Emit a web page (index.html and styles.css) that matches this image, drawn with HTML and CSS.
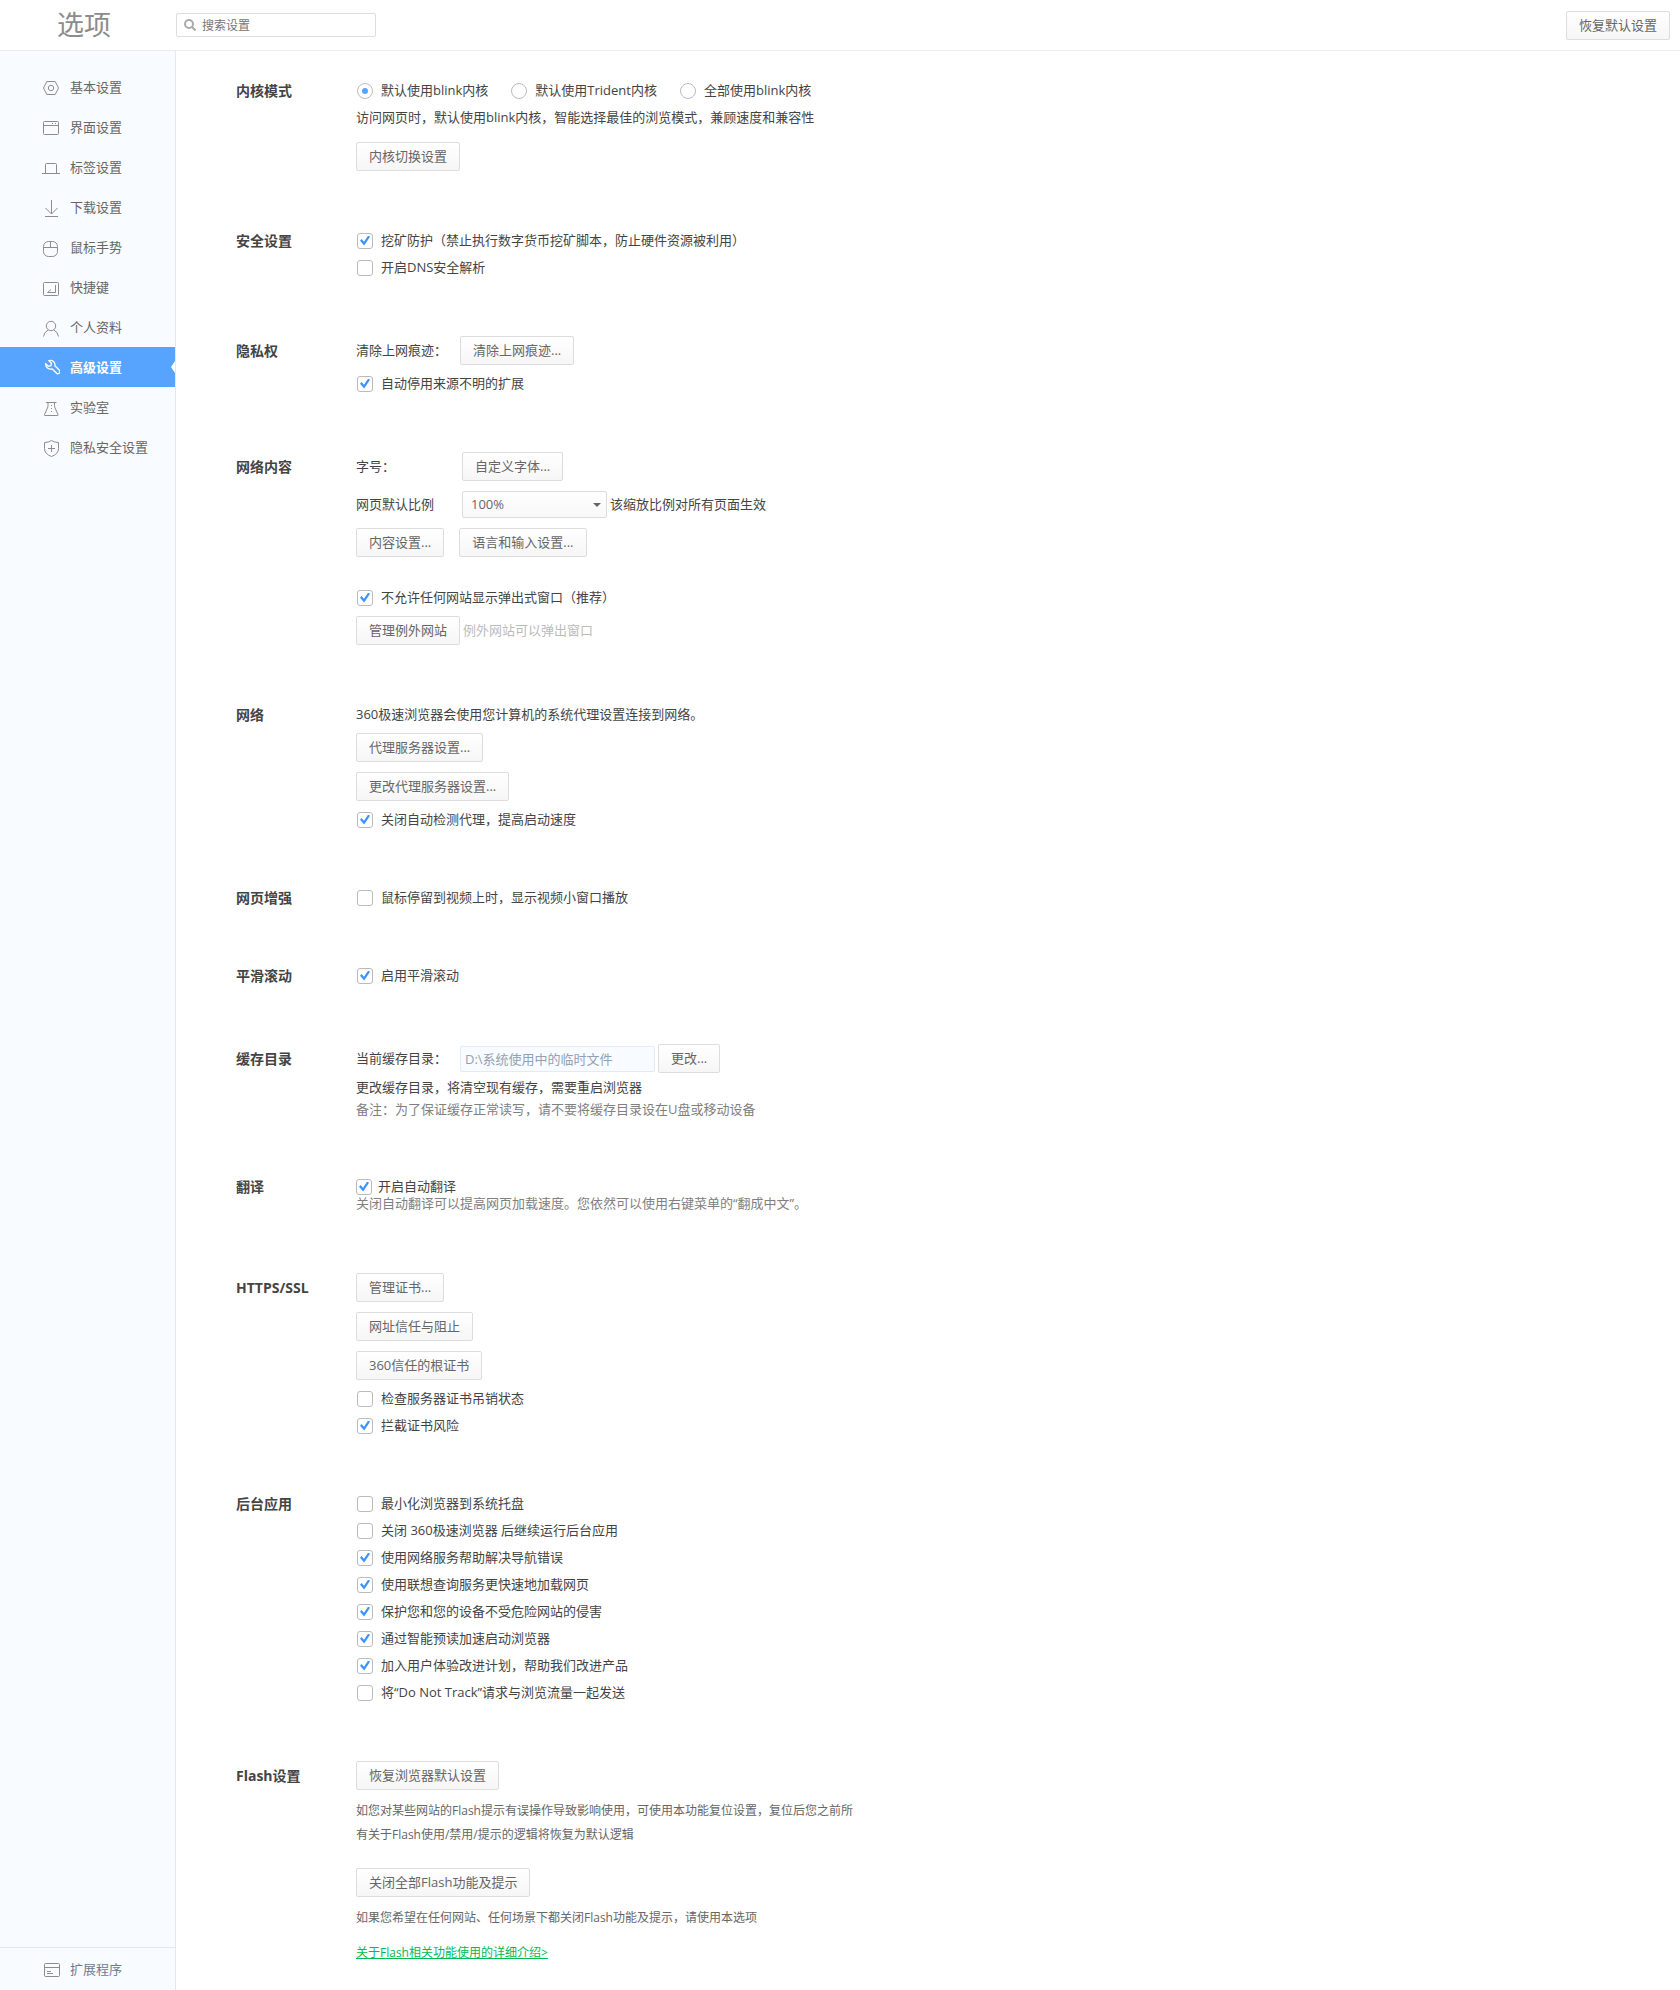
FILE: index.html
```html
<!DOCTYPE html>
<html lang="zh-CN">
<head>
<meta charset="utf-8">
<meta name="viewport" content="width=device-width, initial-scale=1">
<title>选项 - 高级设置</title>
<link rel="stylesheet" href="styles.css">
</head>
<body>
<header class="topbar">
  <h1 class="topbar-title">选项</h1>
  <label class="search">
    <svg class="search-icon" viewBox="0 0 12 12" aria-hidden="true"><circle cx="5" cy="5" r="4"/><path d="M8 8l3.5 3.5"/></svg>
    <input type="text" class="search-input" placeholder="搜索设置" aria-label="搜索设置">
  </label>
  <button type="button" class="btn topbar-reset">恢复默认设置</button>
</header>

<div class="layout">
  <nav class="sidebar">
    <ul class="nav-list">
      <li><a class="nav-link" href="#basic"><svg class="icon" viewBox="0 0 18 20"><path d="M4.8 4.500h8.400L16.500 11l-3.300 6.500H4.800L1.500 11z"/><circle cx="9" cy="11" r="2.700"/></svg>基本设置</a></li>
      <li><a class="nav-link" href="#ui"><svg class="icon" viewBox="0 0 18 20"><rect x="1.5" y="4.5" width="15" height="13" rx="1"/><path d="M1.500 8.500h15M10 6.500h1M13 6.500h1"/></svg>界面设置</a></li>
      <li><a class="nav-link" href="#tabs"><svg class="icon" viewBox="0 0 18 20"><path d="M0 16.500h18M3.500 16.500V7.500q0-1 1-1h9q1 0 1 1v9"/></svg>标签设置</a></li>
      <li><a class="nav-link" href="#download"><svg class="icon" viewBox="0 0 18 20"><path d="M9.500 3v14M3.500 11l6 6 6-6M3 19.500h13"/></svg>下载设置</a></li>
      <li><a class="nav-link" href="#mouse"><svg class="icon" viewBox="0 0 18 20"><rect x="1.500" y="4.500" width="14" height="15" rx="5"/><path d="M1.500 10.500h14M8.500 4.500v6"/></svg>鼠标手势</a></li>
      <li><a class="nav-link" href="#keys"><svg class="icon" viewBox="0 0 18 20"><rect x="1.500" y="5.500" width="15" height="13" rx="1"/><path d="M13.500 8v7.500H5.500L9 12.500"/></svg>快捷键</a></li>
      <li><a class="nav-link" href="#profile"><svg class="icon" viewBox="0 0 18 20"><circle cx="9" cy="9" r="4.700"/><path d="M1.500 19.500q.3-4 4.700-6.600M16.500 19.500q-.3-4-4.700-6.600"/></svg>个人资料</a></li>
      <li><a class="nav-link nav-link-active" href="#advanced" aria-current="page"><svg class="icon" viewBox="0 0 18 20"><path d="M7 3.700c3.500-1 6.600 1.500 5.900 5.100l4.300 4.200c1.200 1.300.6 3.300-.8 3.700-.8.200-1.500-.1-2-.7L10.200 12c-3.500.8-6.800-1.700-6.500-5.200l2.800 2.500 2.500-.6.500-2.500z"/></svg>高级设置</a></li>
      <li><a class="nav-link" href="#lab"><svg class="icon" viewBox="0 0 18 20"><path d="M4 5.500h10.500M6 5.500v3q0 1.500-1 3.500l-2.500 5.500q-.5 1 .5 1h12.500q1 0 .5-1L13.500 12q-1-2-1-3.500v-3M9.500 8v1M9.500 11v1M9.500 14v1"/></svg>实验室</a></li>
      <li><a class="nav-link" href="#security"><svg class="icon" viewBox="0 0 18 20"><path d="M9.500 3.500q3 2 7 2v6q0 5.500-7 8-7-2.500-7-8v-6q4 0 7-2zM9.500 8v7M6 11.500h7"/></svg>隐私安全设置</a></li>
    </ul>
    <a class="nav-link nav-link-footer" href="#extensions"><svg class="icon" viewBox="0 0 18 20"><rect x="2.500" y="4.500" width="15" height="13" rx="1"/><path d="M2.500 8.500h15M5 12.500h4M5 14.500h6"/></svg>扩展程序</a>
  </nav>

  <main class="content">
    <section class="section">
      <h2 class="section-title">内核模式</h2>
      <div class="section-body">
        <div class="radios" role="radiogroup" aria-label="内核模式">
          <label class="option"><input type="radio" name="core" class="radio" checked>默认使用blink内核</label>
          <label class="option"><input type="radio" name="core" class="radio">默认使用Trident内核</label>
          <label class="option"><input type="radio" name="core" class="radio">全部使用blink内核</label>
        </div>
        <p class="line line-spaced">访问网页时，默认使用blink内核，智能选择最佳的浏览模式，兼顾速度和兼容性</p>
        <div class="row"><button type="button" class="btn">内核切换设置</button></div>
      </div>
    </section>

    <section class="section">
      <h2 class="section-title">安全设置</h2>
      <div class="section-body">
        <label class="option"><input type="checkbox" class="check" checked>挖矿防护（禁止执行数字货币挖矿脚本，防止硬件资源被利用）</label>
        <label class="option"><input type="checkbox" class="check">开启DNS安全解析</label>
      </div>
    </section>

    <section class="section section-form">
      <h2 class="section-title">隐私权</h2>
      <div class="section-body">
        <div class="row"><span class="field-label">清除上网痕迹：</span><button type="button" class="btn">清除上网痕迹...</button></div>
        <label class="option"><input type="checkbox" class="check" checked>自动停用来源不明的扩展</label>
      </div>
    </section>

    <section class="section section-form">
      <h2 class="section-title">网络内容</h2>
      <div class="section-body">
        <div class="row"><span class="field-label field-label-wide">字号：</span><button type="button" class="btn">自定义字体...</button></div>
        <div class="row">
          <label class="field-label field-label-wide" for="zoom">网页默认比例</label>
          <span class="select-box"><select id="zoom" class="select"><option>100%</option><option>125%</option><option>150%</option></select></span>
          <span class="after">该缩放比例对所有页面生效</span>
        </div>
        <div class="row row-pair"><button type="button" class="btn">内容设置...</button><button type="button" class="btn">语言和输入设置...</button></div>
        <label class="option option-apart"><input type="checkbox" class="check" checked>不允许任何网站显示弹出式窗口（推荐）</label>
        <div class="row"><button type="button" class="btn">管理例外网站</button><span class="after after-faint">例外网站可以弹出窗口</span></div>
      </div>
    </section>

    <section class="section">
      <h2 class="section-title">网络</h2>
      <div class="section-body">
        <p class="line">360极速浏览器会使用您计算机的系统代理设置连接到网络。</p>
        <div class="row"><button type="button" class="btn">代理服务器设置...</button></div>
        <div class="row"><button type="button" class="btn">更改代理服务器设置...</button></div>
        <label class="option"><input type="checkbox" class="check" checked>关闭自动检测代理，提高启动速度</label>
      </div>
    </section>

    <section class="section">
      <h2 class="section-title">网页增强</h2>
      <div class="section-body">
        <label class="option"><input type="checkbox" class="check">鼠标停留到视频上时，显示视频小窗口播放</label>
      </div>
    </section>

    <section class="section">
      <h2 class="section-title">平滑滚动</h2>
      <div class="section-body">
        <label class="option"><input type="checkbox" class="check" checked>启用平滑滚动</label>
      </div>
    </section>

    <section class="section section-form">
      <h2 class="section-title">缓存目录</h2>
      <div class="section-body">
        <div class="row">
          <label class="field-label" for="cache">当前缓存目录：</label>
          <input id="cache" type="text" class="path-input" value="D:\系统使用中的临时文件" readonly>
          <button type="button" class="btn btn-after">更改...</button>
        </div>
        <div class="notes">
          <p>更改缓存目录，将清空现有缓存，需要重启浏览器</p>
          <p class="muted">备注：为了保证缓存正常读写，请不要将缓存目录设在U盘或移动设备</p>
        </div>
      </div>
    </section>

    <section class="section section-tight">
      <h2 class="section-title">翻译</h2>
      <div class="section-body">
        <label class="option"><input type="checkbox" class="check" checked>开启自动翻译</label>
        <p class="muted">关闭自动翻译可以提高网页加载速度。您依然可以使用右键菜单的“翻成中文”。</p>
      </div>
    </section>

    <section class="section section-form">
      <h2 class="section-title">HTTPS/SSL</h2>
      <div class="section-body">
        <div class="row"><button type="button" class="btn">管理证书...</button></div>
        <div class="row"><button type="button" class="btn">网址信任与阻止</button></div>
        <div class="row"><button type="button" class="btn">360信任的根证书</button></div>
        <label class="option"><input type="checkbox" class="check">检查服务器证书吊销状态</label>
        <label class="option"><input type="checkbox" class="check" checked>拦截证书风险</label>
      </div>
    </section>

    <section class="section">
      <h2 class="section-title">后台应用</h2>
      <div class="section-body">
        <label class="option"><input type="checkbox" class="check">最小化浏览器到系统托盘</label>
        <label class="option"><input type="checkbox" class="check">关闭 360极速浏览器 后继续运行后台应用</label>
        <label class="option"><input type="checkbox" class="check" checked>使用网络服务帮助解决导航错误</label>
        <label class="option"><input type="checkbox" class="check" checked>使用联想查询服务更快速地加载网页</label>
        <label class="option"><input type="checkbox" class="check" checked>保护您和您的设备不受危险网站的侵害</label>
        <label class="option"><input type="checkbox" class="check" checked>通过智能预读加速启动浏览器</label>
        <label class="option"><input type="checkbox" class="check" checked>加入用户体验改进计划，帮助我们改进产品</label>
        <label class="option"><input type="checkbox" class="check">将“Do Not Track”请求与浏览流量一起发送</label>
      </div>
    </section>

    <section class="section section-form">
      <h2 class="section-title">Flash设置</h2>
      <div class="section-body">
        <div class="row"><button type="button" class="btn">恢复浏览器默认设置</button></div>
        <p class="help help-last">如您对某些网站的Flash提示有误操作导致影响使用，可使用本功能复位设置，复位后您之前所有关于Flash使用/禁用/提示的逻辑将恢复为默认逻辑</p>
        <div class="row"><button type="button" class="btn">关闭全部Flash功能及提示</button></div>
        <p class="help">如果您希望在任何网站、任何场景下都关闭Flash功能及提示，请使用本选项</p>
        <a class="help-link" href="#flash-help">关于Flash相关功能使用的详细介绍&gt;</a>
      </div>
    </section>
  </main>
</div>
</body>
</html>
```
FILE: styles.css
```css
* {
  box-sizing: border-box;
}

body {
  margin: 0;
  min-height: 100vh;
  display: flex;
  flex-direction: column;
  background: #fff;
  color: #444;
  font: 13px/17px "Open Sans", "Noto Sans CJK SC", sans-serif;
}

h1, h2, p, ul {
  margin: 0;
  padding: 0;
}

button, input, select {
  font: inherit;
}

/* Top bar */
.topbar {
  display: flex;
  align-items: center;
  height: 51px;
  padding-right: 10px;
  border-bottom: 1px solid #e9ebee;
}

.topbar-title {
  width: 176px;
  padding-left: 57px;
  color: #8c8c8c;
  font-size: 27px;
  font-weight: 400;
  line-height: 50px;
}

.search {
  display: flex;
  align-items: center;
  gap: 6px;
  width: 200px;
  height: 24px;
  padding: 0 7px;
  border: 1px solid #ddd;
  border-radius: 2px;
}

.search-icon {
  flex: none;
  width: 12px;
  height: 12px;
  fill: none;
  stroke: #aaa;
  stroke-width: 2;
}

.search-input {
  flex: 1;
  min-width: 0;
  padding: 0;
  border: 0;
  outline: 0;
  background: none;
  color: #666;
  font-size: 12px;
}

.search-input::placeholder {
  color: #757575;
}

.topbar-reset {
  margin-left: auto;
}

.btn {
  flex: none;
  height: 29px;
  padding: 0 12px;
  border: 1px solid #ddd;
  border-radius: 2px;
  background: linear-gradient(#fff, #f6f6f6);
  color: #666;
}

/* Sidebar */
.layout {
  flex: 1;
  display: flex;
}

.sidebar {
  flex: none;
  display: flex;
  flex-direction: column;
  justify-content: space-between;
  width: 176px;
  padding-top: 16px;
  border-right: 1px solid #e3e8ef;
  background: #f8fbff;
}

.nav-list {
  list-style: none;
}

.nav-link {
  display: flex;
  align-items: center;
  gap: 10px;
  height: 40px;
  padding-left: 42px;
  color: #666;
  text-decoration: none;
}

.nav-link-active {
  position: relative;
  background: #56a4ff;
  color: #fff;
  font-weight: 700;
}

.nav-link-active::after {
  content: "";
  position: absolute;
  right: 0;
  top: 14px;
  border: 6px solid transparent;
  border-left-width: 0;
  border-right: 4px solid #fff;
}

.nav-link-footer {
  height: 43px;
  border-top: 1px solid #e3e8ef;
  color: #6d7b8f;
}

.icon {
  flex: none;
  width: 18px;
  height: 20px;
  fill: none;
  stroke: #8c8c8c;
  stroke-width: 1;
}

.nav-link-active .icon {
  stroke: #fff;
  stroke-width: 1.3;
}

/* Settings */
.content {
  flex: 1;
  min-width: 0;
  padding: 26px 20px 24px 60px;
}

.section {
  display: grid;
  grid-template-columns: 120px minmax(0, 1fr);
}

.section + .section {
  margin-top: 51px;
}

.section + .section-form {
  margin-top: 50px;
}

.section-title {
  font-size: 14px;
  font-weight: 700;
  line-height: 27px;
}

.section-form .section-title {
  line-height: 39px;
}

.section-tight {
  padding: 8px 0 6px;
}

.section-tight .section-title {
  line-height: 17px;
}

.radios {
  display: flex;
  flex-wrap: wrap;
  gap: 0 22px;
}

.option {
  display: flex;
  align-items: center;
  gap: 8px;
  width: fit-content;
  min-height: 27px;
  padding-left: 1px;
}

.option-apart {
  margin-top: 22px;
}

.section-tight .option {
  gap: 6px;
  min-height: 17px;
  padding-left: 0;
}

.check,
.radio {
  appearance: none;
  flex: none;
  display: grid;
  place-items: center;
  width: 16px;
  height: 16px;
  margin: 0;
  border: 1px solid #bbb;
  border-radius: 3px;
  background: #fff;
}

.radio {
  border-radius: 50%;
}

.check:checked::after {
  content: "";
  width: 10px;
  height: 10px;
  background: #3b94ff;
  clip-path: polygon(0 52%, 16% 36%, 40% 62%, 82% 0, 100% 13%, 42% 100%);
}

.radio:checked::after {
  content: "";
  width: 6px;
  height: 6px;
  border-radius: 50%;
  background: #56a4ff;
}

.line {
  line-height: 27px;
}

.line-spaced {
  margin-bottom: 6px;
}

.row {
  display: flex;
  align-items: center;
  padding: 5px 0;
}

.row-pair {
  gap: 15px;
}

.field-label {
  flex: none;
  width: 104px;
}

.field-label-wide {
  width: 106px;
}

.select-box {
  position: relative;
  width: 145px;
}

.select-box::after {
  content: "";
  position: absolute;
  right: 6px;
  top: 12px;
  border: 4px solid transparent;
  border-top-color: #666;
  border-bottom-width: 0;
  pointer-events: none;
}

.select {
  appearance: none;
  display: block;
  width: 100%;
  height: 27px;
  padding: 0 8px;
  border: 1px solid #ddd;
  border-radius: 2px;
  background: linear-gradient(#fff, #f8f8f8);
  color: #666;
}

.after {
  margin-left: 3px;
}

.after-faint {
  color: #bbb;
}

.path-input {
  width: 195px;
  height: 26px;
  padding: 0 4px;
  border: 1px solid #e2eaf3;
  border-radius: 2px;
  background: #f8fbff;
  color: #92a1b4;
}

.btn-after {
  margin-left: 3px;
}

.notes {
  display: grid;
  gap: 4px;
  padding-bottom: 1px;
  line-height: 18px;
}

.muted {
  color: #808080;
}

.help {
  max-width: 500px;
  margin-top: 4px;
  color: #666;
  font-size: 12px;
  line-height: 24px;
}

.help-last {
  margin-bottom: 16px;
}

.help-link {
  display: block;
  width: fit-content;
  margin-top: 11px;
  color: #0b5;
  font-size: 12px;
  line-height: 24px;
}
```
